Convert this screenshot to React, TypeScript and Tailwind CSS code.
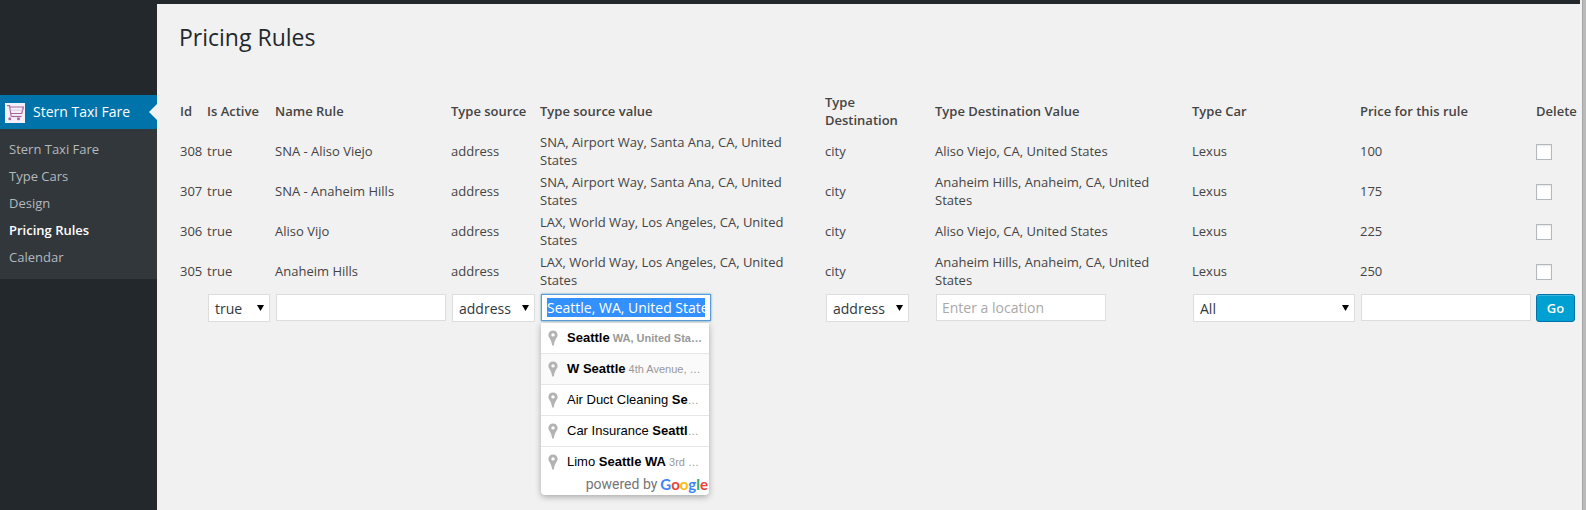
import { useEffect, useRef, type ReactNode } from "react";

const menu = ["Stern Taxi Fare", "Type Cars", "Design", "Pricing Rules", "Calendar"];

const columns = [
  "Id",
  "Is Active",
  "Name Rule",
  "Type source",
  "Type source value",
  "Type Destination",
  "Type Destination Value",
  "Type Car",
  "Price for this rule",
  "Delete",
];

const rules = [
  ["308", "true", "SNA - Aliso Viejo", "address", "SNA, Airport Way, Santa Ana, CA, United States", "city", "Aliso Viejo, CA, United States", "Lexus", "100"],
  ["307", "true", "SNA - Anaheim Hills", "address", "SNA, Airport Way, Santa Ana, CA, United States", "city", "Anaheim Hills, Anaheim, CA, United States", "Lexus", "175"],
  ["306", "true", "Aliso Vijo", "address", "LAX, World Way, Los Angeles, CA, United States", "city", "Aliso Viejo, CA, United States", "Lexus", "225"],
  ["305", "true", "Anaheim Hills", "address", "LAX, World Way, Los Angeles, CA, United States", "city", "Anaheim Hills, Anaheim, CA, United States", "Lexus", "250"],
];

function CartIcon() {
  return (
    <svg viewBox="0 0 20 20" className="h-5 w-5 shrink-0 bg-[#f4f0f7]" aria-hidden="true" fill="none" stroke="#a9689b" strokeWidth="1.2">
      <path d="M2 2.600h2.500l1.700 10.900" />
      <path d="M5 4h13.400l-1.600 6.500H6" />
      <path d="M6.200 13.500h10.300" />
      <path d="M5.500 7.200h12" stroke="#dcc3dc" strokeWidth="0.8" />
      <circle cx="4.800" cy="15.800" r="0.900" fill="#a9689b" />
      <circle cx="13.500" cy="15.800" r="0.900" fill="#a9689b" />
    </svg>
  );
}

function PinIcon() {
  return (
    <svg viewBox="0 0 10 16" className="mr-2 ml-[3px] h-4 w-2.5 shrink-0" aria-hidden="true">
      <path
        fill="#b3b3b3"
        fillRule="evenodd"
        d="M5 .4C2.300 .4.400 2.300.400 4.900c0 2.900 3 3.900 3.800 10.600h1.600C6.600 8.800 9.600 7.800 9.600 4.900 9.600 2.300 7.700.400 5 .400zM5 3.200a1.700 1.700 0 1 1 0 3.400 1.700 1.700 0 0 1 0-3.400z"
      />
    </svg>
  );
}

function Select({ label, value, className }: { label: string; value: string; className: string }) {
  return (
    <div className={`relative m-px ${className}`}>
      <select
        aria-label={label}
        defaultValue={value}
        className="block h-7 w-full appearance-none border border-[#ddd] bg-white pt-px pl-1.5 text-sm leading-5 text-[#32373c] outline-none"
      >
        <option>{value}</option>
      </select>
      <svg viewBox="0 0 7 6" className="pointer-events-none absolute top-[11px] right-1.5 h-1.5 w-[7px]" aria-hidden="true">
        <path d="M0 0h7L3.500 6z" fill="#000" />
      </svg>
    </div>
  );
}

const inputStyle =
  "m-px block h-[27px] w-[170px] border bg-white px-[5px] text-sm leading-5 text-[#32373c] outline-none placeholder:text-[#a9a9a9]";

function Suggestion({ children, detail, className = "" }: { children: ReactNode; detail: string; className?: string }) {
  return (
    <li className={`flex h-[31px] items-center border-b border-[#e6e6e6] pl-1 last:h-[30px] last:border-b-0 ${className}`}>
      <PinIcon />
      <span className="ml-px text-[11px] leading-[30px] whitespace-nowrap text-[#999]">
        <span className="text-[13px] text-black">{children}</span>
        {detail}
      </span>
    </li>
  );
}

function Suggestions() {
  return (
    <div className="absolute top-[29px] left-px z-10 w-[168px] rounded-b-sm bg-white font-['Liberation_Sans',Arial,sans-serif] shadow-[0_2px_6px_rgba(0,0,0,0.3)]">
      <ul>
        <Suggestion detail=" WA, United Sta…" className="font-bold">
          Seattle
        </Suggestion>
        <Suggestion detail=" 4th Avenue, …" className="bg-[#fafafa]">
          <b>W Seattle</b>
        </Suggestion>
        <Suggestion detail="…">
          Air Duct Cleaning <b>Se</b>
        </Suggestion>
        <Suggestion detail="…">
          Car Insurance <b>Seattl</b>
        </Suggestion>
        <Suggestion detail=" 3rd …">
          Limo <b>Seattle WA</b>
        </Suggestion>
      </ul>
      <div className="flex h-[18px] items-center justify-end gap-[3px] pr-px pb-1 text-[#757575]">
        <span className="font-['Roboto',sans-serif] text-sm leading-4">powered by</span>
        <span className="font-['Lato',sans-serif] text-[15px] leading-4 font-bold">
          <span className="text-[#4285f4]">G</span>
          <span className="text-[#ea4335]">o</span>
          <span className="text-[#fbbc05]">o</span>
          <span className="text-[#4285f4]">g</span>
          <span className="text-[#34a853]">l</span>
          <span className="text-[#ea4335]">e</span>
        </span>
      </div>
    </div>
  );
}

export default function App() {
  const source = useRef<HTMLInputElement>(null);

  useEffect(() => {
    const field = source.current;
    if (!field) return;
    field.focus({ preventScroll: true });
    field.setSelectionRange(0, field.value.length, "backward");
    const frame = requestAnimationFrame(() => {
      field.scrollLeft = 0;
    });
    return () => cancelAnimationFrame(frame);
  }, []);

  return (
    <div className="flex min-h-screen bg-[#f1f1f1] font-['Open_Sans',sans-serif] text-[13px] leading-[18px] text-[#444]">
      <nav className="w-[157px] shrink-0 bg-[#23282d] pt-[95px]">
        <a href="#" className="relative flex h-[34px] items-center gap-2 bg-[#0073aa] pl-[5px] text-sm text-white">
          <span className="pt-0.5">
            <CartIcon />
          </span>
          Stern Taxi Fare
          <span className="absolute top-[9px] right-0 border-y-8 border-r-8 border-y-transparent border-r-[#f1f1f1]" />
        </a>
        <ul className="bg-[#32373c] pt-[7px] pb-2">
          {menu.map((item) => (
            <li key={item}>
              <a
                href="#"
                className={`block px-[9px] leading-[27px] ${item === "Pricing Rules" ? "font-semibold text-white" : "text-[#b4b9be]"}`}
              >
                {item}
              </a>
            </li>
          ))}
        </ul>
      </nav>

      <main className="min-w-0 flex-1 pr-0.5">
        <div className="h-1 bg-[#23282d]" />
        <div className="pl-5">
          <h1 className="mt-[18px] mb-[38px] pl-0.5 text-[23px] leading-[30px] font-normal text-[#23282d]">Pricing Rules</h1>
          <table className="w-full table-fixed border-separate border-spacing-[2px] text-left">
            <colgroup>
              <col className="w-[25px]" />
              <col className="w-[66px]" />
              <col className="w-[174px]" />
              <col className="w-[87px]" />
              <col className="w-[283px]" />
              <col className="w-[108px]" />
              <col className="w-[255px]" />
              <col className="w-[166px]" />
              <col className="w-[174px]" />
              <col className="w-[43px]" />
            </colgroup>
            <thead>
              <tr>
                {columns.map((name) => (
                  <th key={name} className="p-px font-semibold">
                    {name}
                  </th>
                ))}
              </tr>
            </thead>
            <tbody>
              {rules.map((rule) => (
                <tr key={rule[0]} className="h-[38px]">
                  {rule.map((value, i) => (
                    <td key={columns[i]} className="p-px">
                      {value}
                    </td>
                  ))}
                  <td className="p-px">
                    <input
                      type="checkbox"
                      aria-label={`Delete rule ${rule[0]}`}
                      className="mt-px block h-4 w-4 appearance-none border border-[#b4b9be] bg-white shadow-[inset_0_1px_2px_rgba(0,0,0,0.1)]"
                    />
                  </td>
                </tr>
              ))}
              <tr className="align-top">
                <td className="p-px" />
                <td className="p-px">
                  <Select label="Is Active" value="true" className="w-[62px]" />
                </td>
                <td className="p-px">
                  <input aria-label="Name Rule" className={`${inputStyle} border-[#ddd]`} />
                </td>
                <td className="p-px">
                  <Select label="Type source" value="address" className="w-[83px]" />
                </td>
                <td className="p-px">
                  <div className="relative">
                    <input
                      ref={source}
                      aria-label="Type source value"
                      defaultValue="Seattle, WA, United States"
                      className={`${inputStyle} border-[#5b9dd9] shadow-[0_0_2px_rgba(30,140,190,0.8)] selection:bg-[#3390ff] selection:text-white`}
                    />
                    <Suggestions />
                  </div>
                </td>
                <td className="p-px">
                  <Select label="Type Destination" value="address" className="w-[83px]" />
                </td>
                <td className="p-px">
                  <input aria-label="Type Destination Value" placeholder="Enter a location" className={`${inputStyle} border-[#ddd]`} />
                </td>
                <td className="p-px">
                  <Select label="Type Car" value="All" className="w-[162px]" />
                </td>
                <td className="p-px">
                  <input aria-label="Price for this rule" className={`${inputStyle} border-[#ddd]`} />
                </td>
                <td className="p-px">
                  <button
                    type="button"
                    className="mt-px block h-7 w-[39px] rounded-[3px] border border-[#0073aa] bg-[#00a0d2] text-[13px] font-semibold text-white shadow-[inset_0_1px_0_rgba(120,200,230,0.5)]"
                  >
                    Go
                  </button>
                </td>
              </tr>
            </tbody>
          </table>
        </div>
      </main>
      <div className="w-1 shrink-0 border-l border-[#a5a5a5] bg-[#bababa]" />
    </div>
  );
}
